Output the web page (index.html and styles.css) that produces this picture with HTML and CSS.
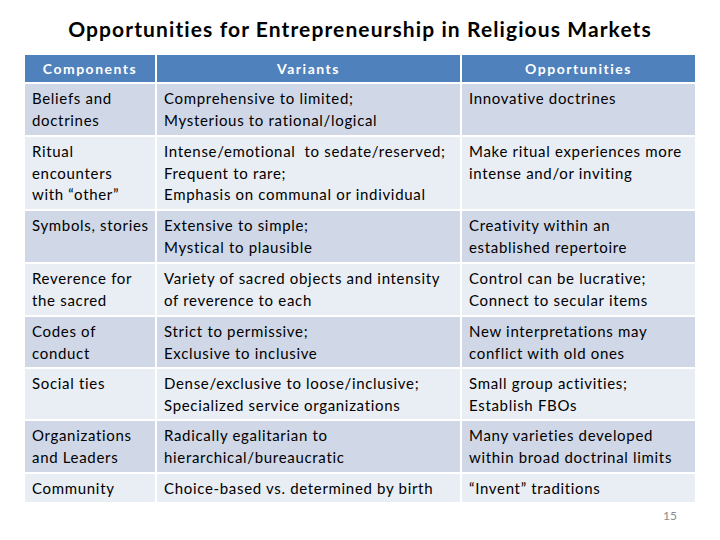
FILE: index.html
```html
<!DOCTYPE html>
<html>
<head>
<meta charset="utf-8">
<link rel="stylesheet" href="styles.css">
</head>
<body>
<div class="slide">
  <h1 class="title">Opportunities for Entrepreneurship in Religious Markets</h1>
  <div class="grid">
    <div class="cell head">Components</div>
    <div class="cell head">Variants</div>
    <div class="cell head">Opportunities</div>

    <div class="cell dark">Beliefs and<br>doctrines</div>
    <div class="cell dark">Comprehensive to limited;<br>Mysterious to rational/logical</div>
    <div class="cell dark">Innovative doctrines</div>

    <div class="cell light">Ritual<br>encounters<br>with “other”</div>
    <div class="cell light">Intense/emotional&nbsp; to sedate/reserved;<br>Frequent to rare;<br>Emphasis on communal or individual</div>
    <div class="cell light">Make ritual experiences more<br>intense and/or inviting</div>

    <div class="cell dark">Symbols, stories</div>
    <div class="cell dark">Extensive to simple;<br>Mystical to plausible</div>
    <div class="cell dark">Creativity within an<br>established repertoire</div>

    <div class="cell light">Reverence for<br>the sacred</div>
    <div class="cell light">Variety of sacred objects and intensity<br>of reverence to each</div>
    <div class="cell light">Control can be lucrative;<br>Connect to secular items</div>

    <div class="cell dark">Codes of<br>conduct</div>
    <div class="cell dark">Strict to permissive;<br>Exclusive to inclusive</div>
    <div class="cell dark">New interpretations may<br>conflict with old ones</div>

    <div class="cell light">Social ties</div>
    <div class="cell light">Dense/exclusive to loose/inclusive;<br>Specialized service organizations</div>
    <div class="cell light">Small group activities;<br>Establish FBOs</div>

    <div class="cell dark">Organizations<br>and Leaders</div>
    <div class="cell dark">Radically egalitarian to<br>hierarchical/bureaucratic</div>
    <div class="cell dark">Many varieties developed<br>within broad doctrinal limits</div>

    <div class="cell light">Community</div>
    <div class="cell light">Choice-based vs. determined by birth</div>
    <div class="cell light">“Invent” traditions</div>
  </div>
  <div class="pagenum">15</div>
</div>
</body>
</html>
```

FILE: styles.css
```css
html, body {
  margin: 0;
  padding: 0;
  background: #ffffff;
}
.slide {
  width: 720px;
  height: 540px;
  box-sizing: border-box;
  padding-top: 14px;
  font-family: Lato, "Open Sans", sans-serif;
  font-variant-ligatures: none;
  color: #000;
}
.title {
  margin: 0;
  font-size: 21px;
  font-weight: bold;
  letter-spacing: 1.1px;
  text-align: center;
  line-height: 30px;
  height: 41px;
}
.grid {
  margin-left: 25px;
  width: 670px;
  display: grid;
  grid-template-columns: 130px 303px 233px;
  grid-template-rows: 27px 51px 72px 51px 51px 50px 50px 51px 28px;
  gap: 2px;
}
.cell {
  box-sizing: border-box;
  padding: 4px 4px 0 7px;
  font-size: 15px;
  letter-spacing: 0.68px;
  line-height: 21.5px;
  white-space: nowrap;
}
.head {
  background: #4f81bd;
  color: #fff;
  font-weight: bold;
  font-size: 14px;
  letter-spacing: 1.5px;
  text-align: center;
  padding: 3px 0 0 0;
}
.dark { background: #d0d8e8; }
.light { background: #e9edf4; }
.pagenum {
  margin-left: 663px;
  margin-top: 6px;
  font-size: 12px;
  color: #8b8b8b;
}
```
